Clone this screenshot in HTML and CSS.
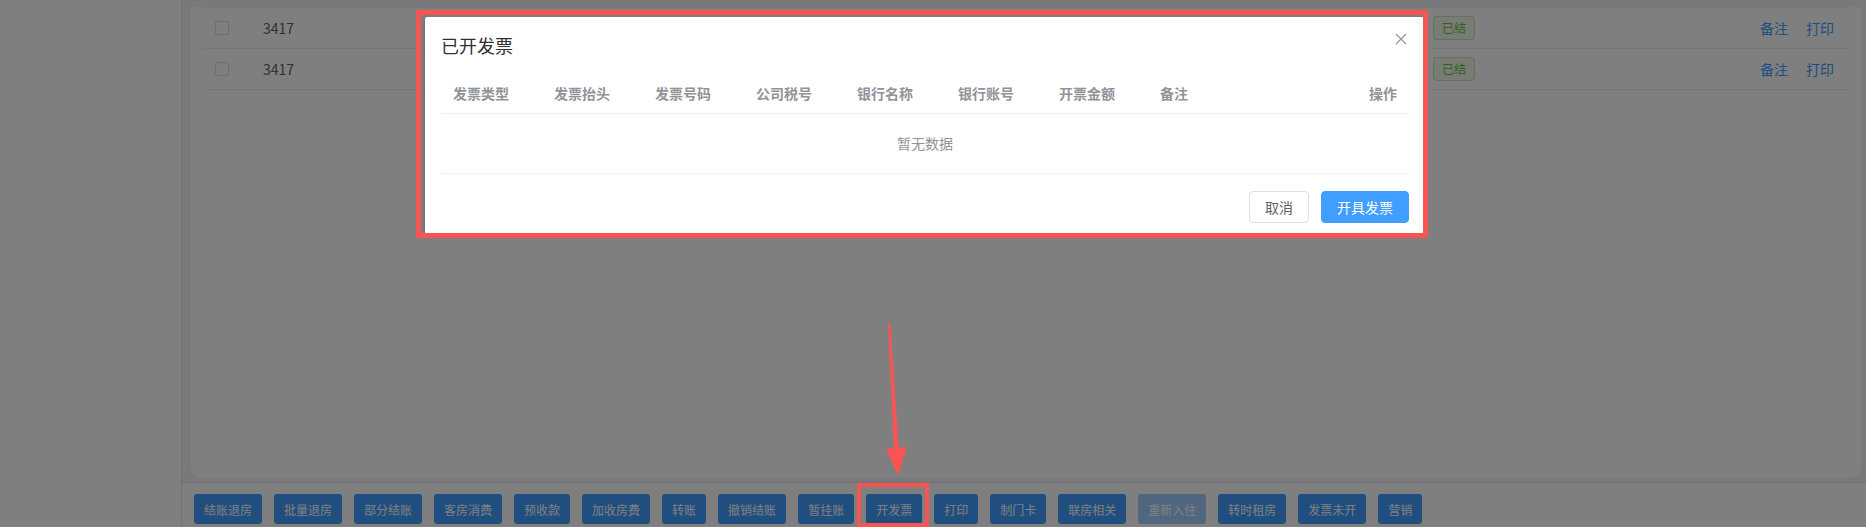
FILE: index.html
```html
<!DOCTYPE html>
<html lang="zh-CN">

<head>
    <meta charset="UTF-8" />
    <meta name="viewport" content="width=device-width, initial-scale=1.0" />
    <title>房态 - 结账</title>
    <link rel="stylesheet" href="styles.css">
</head>

<body>
    <div class="app">
        <aside class="sidebar"></aside>

        <div class="main">
            <div class="content">
                <div class="panel">
                    <div class="rows">
                        <div class="row">
                            <div class="cell cell-check"><span class="checkbox"></span></div>
                            <div class="cell cell-no">3417</div>
                            <div class="cell cell-tag"><span class="tag">已结</span></div>
                            <div class="cell cell-ops"><a class="link">备注</a><a class="link">打印</a></div>
                        </div>
                        <div class="row">
                            <div class="cell cell-check"><span class="checkbox"></span></div>
                            <div class="cell cell-no">3417</div>
                            <div class="cell cell-tag"><span class="tag">已结</span></div>
                            <div class="cell cell-ops"><a class="link">备注</a><a class="link">打印</a></div>
                        </div>
                    </div>
                </div>
            </div>

            <div class="toolbar">
                <button class="btn">结账退房</button>
                <button class="btn">批量退房</button>
                <button class="btn">部分结账</button>
                <button class="btn">客房消费</button>
                <button class="btn">预收款</button>
                <button class="btn">加收房费</button>
                <button class="btn">转账</button>
                <button class="btn">撤销结账</button>
                <button class="btn">暂挂账</button>
                <button class="btn">开发票</button>
                <button class="btn">打印</button>
                <button class="btn">制门卡</button>
                <button class="btn">联房相关</button>
                <button class="btn" disabled>重新入住</button>
                <button class="btn">转时租房</button>
                <button class="btn">发票未开</button>
                <button class="btn">营销</button>
            </div>
        </div>
    </div>

    <div class="modal-mask"></div>

    <div class="dialog" role="dialog" aria-label="已开发票">
        <div class="dialog-header">
            <span class="dialog-title">已开发票</span>
            <button class="dialog-close" aria-label="关闭">
                <svg viewBox="0 0 12 12" width="12" height="12">
                    <path d="M1 1 L11 11 M11 1 L1 11" stroke="#909399" stroke-width="1.2" fill="none" />
                </svg>
            </button>
        </div>

        <div class="invoice-table">
            <div class="thead">
                <div class="th">发票类型</div>
                <div class="th">发票抬头</div>
                <div class="th">发票号码</div>
                <div class="th">公司税号</div>
                <div class="th">银行名称</div>
                <div class="th">银行账号</div>
                <div class="th">开票金额</div>
                <div class="th">备注</div>
                <div class="th th-ops">操作</div>
            </div>
            <div class="empty">暂无数据</div>
        </div>

        <div class="dialog-footer">
            <button class="dlg-btn">取消</button>
            <button class="dlg-btn dlg-btn-primary">开具发票</button>
        </div>
    </div>

    <!-- annotation marks over the screenshot -->
    <svg class="marks" width="1866" height="527" viewBox="0 0 1866 527">
        <rect x="418.5" y="12.5" width="1007" height="223" fill="none" stroke="#f95454" stroke-width="5" />
        <rect x="859" y="485" width="68" height="40" fill="none" stroke="#f95454" stroke-width="4" />
        <polygon points="888,323 890.5,323 899,452 894,452" fill="#f95454" />
        <polygon points="886,449 907,447 898,476" fill="#f95454" />
    </svg>
</body>

</html>
```

FILE: styles.css
```css
* {
    box-sizing: border-box;
}

body {
    margin: 0;
    padding: 0;
    width: 1866px;
    height: 527px;
    overflow: hidden;
    font-family: "Microsoft YaHei", "Noto Sans CJK SC", sans-serif;
    font-size: 14px;
    color: #606266;
    background: #fff;
    position: relative;
}

.app {
    display: flex;
    height: 527px;
}

.sidebar {
    width: 181px;
    background: #fff;
}

.main {
    flex: 1;
    display: flex;
    flex-direction: column;
    background: #f0f2f5;
    border-left: 1px solid #e4e7ed;
}

.content {
    flex: 1;
    padding: 0 3px 10px 8px;
    min-height: 0;
}

.panel {
    height: 100%;
    background: #fff;
    border: 1px solid #ebeef5;
    border-top: none;
    border-radius: 0 0 12px 12px;
    padding: 0 13px 0 12px;
}

.rows {
    margin-top: 7px;
    border-top: 1px solid #ebeef5;
}

.row {
    display: flex;
    align-items: center;
    height: 41px;
    border-bottom: 1px solid #ebeef5;
}

.cell {
    display: flex;
    align-items: center;
}

.cell-check {
    width: 60px;
    padding-left: 12px;
}

.checkbox {
    display: inline-block;
    width: 14px;
    height: 14px;
    border: 1px solid #dcdfe6;
    border-radius: 2px;
    background: #fff;
}

.cell-no {
    flex: 1;
    color: #606266;
}

.cell-tag {
    width: 228px;
    padding-left: 12px;
}

.tag {
    display: inline-block;
    height: 24px;
    line-height: 22px;
    padding: 0 8px;
    font-size: 12px;
    color: #67c23a;
    background: #f0f9eb;
    border: 1px solid #c2e7b0;
    border-radius: 4px;
}

.cell-ops {
    width: 200px;
    justify-content: flex-end;
    gap: 18px;
    padding-right: 15px;
}

.link {
    color: #409eff;
    cursor: pointer;
}

.toolbar {
    height: 45px;
    flex-shrink: 0;
    background: #fff;
    border-top: 1px solid #e4e7ed;
    display: flex;
    gap: 12px;
    padding: 11px 12px 0 12px;
}

.btn {
    height: 30px;
    padding: 0 10px;
    border: none;
    border-radius: 3px;
    background: #409eff;
    color: #fff;
    font-family: inherit;
    font-size: 12px;
    cursor: pointer;
}

.btn:disabled {
    background: #a0cfff;
    cursor: not-allowed;
}

.modal-mask {
    position: absolute;
    top: 0;
    left: 0;
    width: 100%;
    height: 100%;
    background: rgba(0, 0, 0, 0.5);
}

.dialog {
    position: absolute;
    top: 17px;
    left: 425px;
    width: 999px;
    background: #fff;
    border-radius: 2px;
    box-shadow: 0 1px 3px rgba(0, 0, 0, 0.3);
    padding: 16px 15px 11px 16px;
}

.dialog-header {
    height: 24px;
}

.dialog-title {
    font-size: 18px;
    line-height: 24px;
    color: #303133;
}

.dialog-close {
    position: absolute;
    top: 16px;
    right: 17px;
    width: 12px;
    height: 12px;
    padding: 0;
    border: none;
    background: none;
    cursor: pointer;
}

.dialog-close svg {
    display: block;
}

.invoice-table {
    margin-top: 16px;
}

.thead {
    display: flex;
    height: 41px;
    border-bottom: 1px solid #ebeef5;
}

.th {
    width: 101px;
    padding-left: 12px;
    line-height: 40px;
    font-weight: bold;
    color: #909399;
    white-space: nowrap;
}

.th-ops {
    flex: 1;
    text-align: right;
    padding-right: 12px;
}

.empty {
    height: 60px;
    line-height: 59px;
    text-align: center;
    color: #909399;
    border-bottom: 1px solid #ebeef5;
}

.dialog-footer {
    display: flex;
    justify-content: flex-end;
    gap: 12px;
    margin-top: 17px;
}

.dlg-btn {
    height: 32px;
    padding: 0 15px;
    font-family: inherit;
    font-size: 14px;
    color: #606266;
    background: #fff;
    border: 1px solid #dcdfe6;
    border-radius: 4px;
    cursor: pointer;
}

.dlg-btn-primary {
    color: #fff;
    background: #409eff;
    border-color: #409eff;
}

.marks {
    position: absolute;
    top: 0;
    left: 0;
    pointer-events: none;
}
```
